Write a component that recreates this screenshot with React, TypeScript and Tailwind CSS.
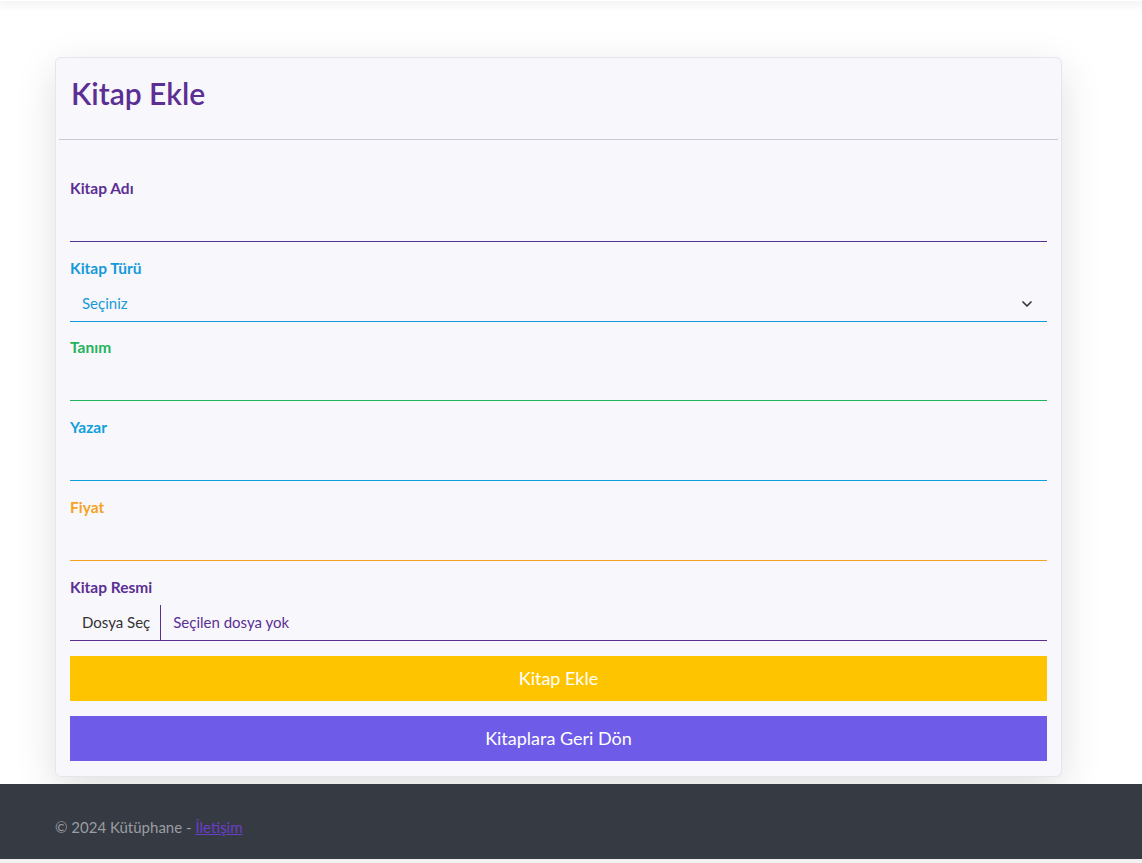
import { ChevronDown } from 'lucide-react';

const fields = [
  { label: 'Tanım', text: 'text-[#1fb45a]', line: 'bg-[#1fb45a]' },
  { label: 'Yazar', text: 'text-[#0ea0dc]', line: 'bg-[#0ea0dc]' },
  { label: 'Fiyat', text: 'text-[#f5a31f]', line: 'bg-[#f5a31f]' },
];

export default function App() {
  return (
    <div className="min-h-screen bg-[#f1f1f1] font-['Lato','Noto_Sans',sans-serif]">
      <div className="bg-white">
        <div className="h-[1px] shadow-[0_0_10px_4px_rgba(0,0,0,0.06)]" />
        <div className="pl-[55px] pr-[80px] pt-[56px] pb-[7px]">
          <div className="rounded-md border border-[#e6e5ec] bg-[#f8f7fc] shadow-[0_12px_40px_rgba(0,0,0,0.13)]">
            <div className="mx-[3px] border-b border-[#cbc7d4] pt-[17px] pb-[28px] pl-[12px]">
              <h1 className="text-[30px] leading-[36px] font-semibold text-[#5b2f93]">Kitap Ekle</h1>
            </div>

            <form className="px-[14px] pt-[38px] pb-[15px]">
              <div className="mb-4">
                <label className="block text-[15.5px] leading-5 font-bold text-[#5b2f93] mb-2">Kitap Adı</label>
                <input type="text" className="block w-full h-[35px] bg-transparent outline-none" />
                <div className="h-px bg-[#53318f]" />
              </div>

              <div className="mb-[15px]">
                <label className="block text-[15.5px] leading-5 font-bold text-[#169ad8] mb-2">Kitap Türü</label>
                <div className="flex items-center h-[35px] px-3">
                  <span className="flex-1 text-[15px] text-[#169ad8]">Seçiniz</span>
                  <ChevronDown className="w-4 h-4 text-[#333]" strokeWidth={2.5} />
                </div>
                <div className="h-px bg-[#169ad8]" />
              </div>

              {fields.map((f) => (
                <div key={f.label} className="mb-4">
                  <label className={`block text-[15.5px] leading-5 font-bold mb-2 ${f.text}`}>{f.label}</label>
                  <input type="text" className="block w-full h-[35px] bg-transparent outline-none" />
                  <div className={`h-px ${f.line}`} />
                </div>
              ))}

              <div className="mb-[15px]">
                <label className="block text-[15.5px] leading-5 font-bold text-[#5b2f93] mb-2">Kitap Resmi</label>
                <div className="flex items-stretch h-[35px] text-[15px]">
                  <span className="flex items-center pl-3 pr-[10px] border-r border-[#5b2f93] text-[#333]">Dosya Seç</span>
                  <span className="flex items-center px-3 text-[#5b2f93]">Seçilen dosya yok</span>
                </div>
                <div className="h-px bg-[#5b2f93]" />
              </div>

              <button type="button" className="block w-full h-[45px] bg-[#ffc400] text-white text-[18px] mb-[15px]">
                Kitap Ekle
              </button>
              <button type="button" className="block w-full h-[45px] bg-[#6e5ce8] text-white text-[18px]">
                Kitaplara Geri Dön
              </button>
            </form>
          </div>
        </div>
      </div>

      <footer className="h-[75px] bg-[#363a42] flex items-center px-[55px] pt-[12px] text-[15px] text-[#9a9da3]">
        <span>
          © 2024 Kütüphane -{' '}
          <a href="#" className="underline text-[#6a3fc9]">İletişim</a>
        </span>
      </footer>
    </div>
  );
}
